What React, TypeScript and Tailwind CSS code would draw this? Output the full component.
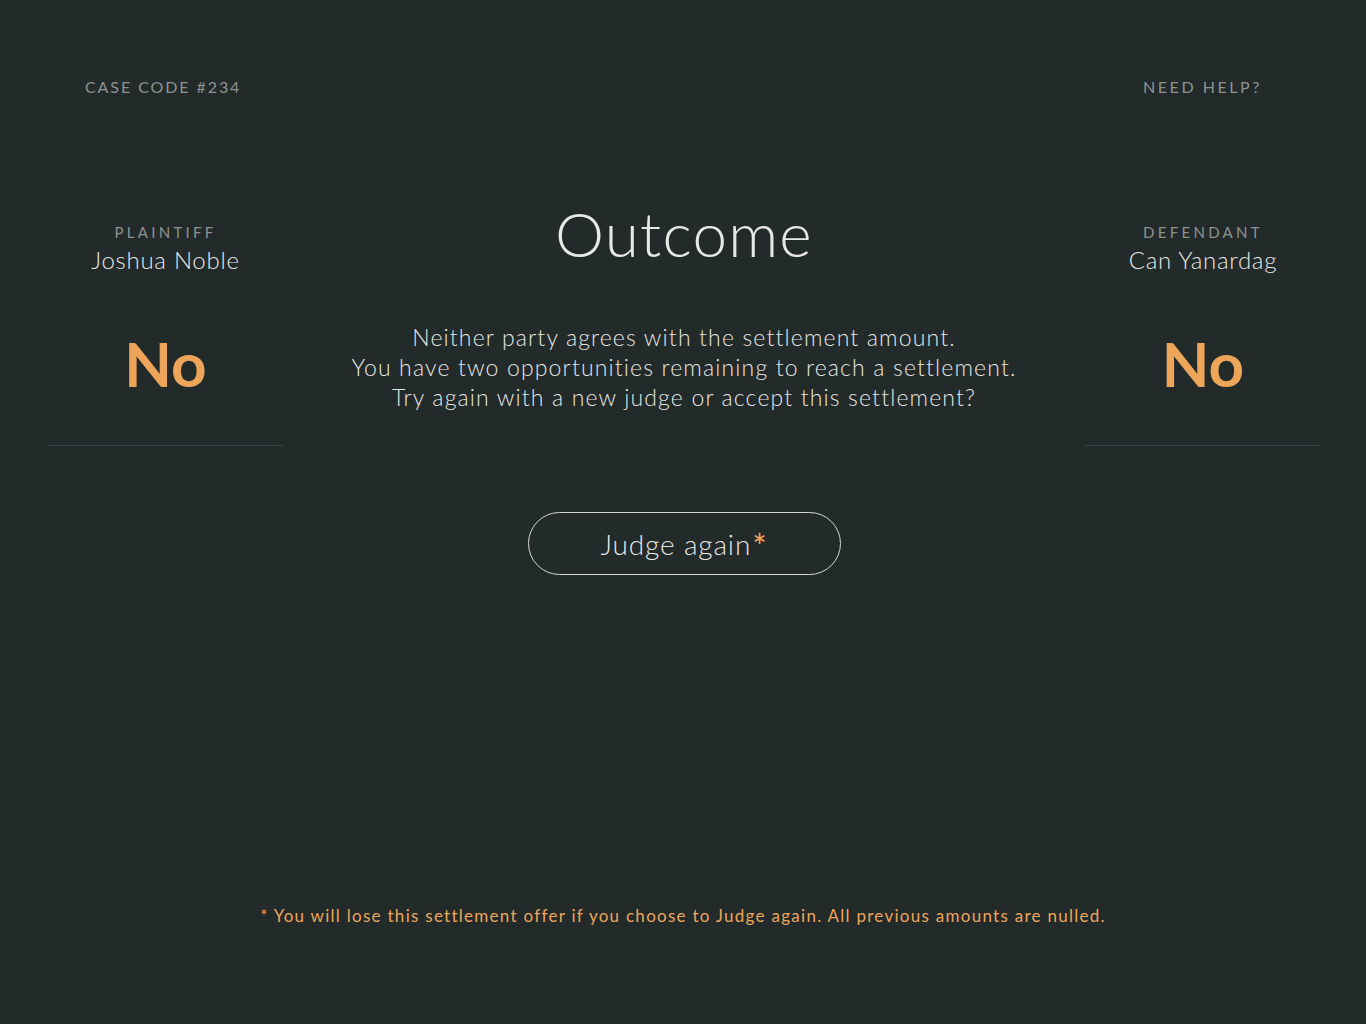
export default function App() {
  return (
    <div className="min-h-screen h-[1024px] w-full bg-[#222a2a] text-[#e6e6e3] flex flex-col font-['Lato',sans-serif]">
      {/* Top bar */}
      <header className="flex items-center justify-between pl-[85px] pr-[104px] pt-[75px] text-[16px] uppercase tracking-[0.12em] text-[#8e9392]">
        <span>Case code #234</span>
        <span className="tracking-[0.16em]">Need help?</span>
      </header>

      {/* Main */}
      <main className="grid grid-cols-[235px_1fr_236px] pl-[48px] pr-[45px] mt-[102px]">
        <Party role="Plaintiff" name="Joshua Noble" answer="No" />

        <section className="flex flex-col items-center">
          <h1 className="text-[62px] leading-none font-light tracking-[0.02em] text-[#e8e8e6] mt-[1px]">
            Outcome
          </h1>
          <p className="mt-[58px] text-center text-[23px] leading-[30px] tracking-[0.05em] font-light text-[#e6e6e3]">
            Neither party agrees with the settlement amount.
            <br />
            You have two opportunities remaining to reach a settlement.
            <br />
            Try again with a new judge or accept this settlement?
          </p>
          <button className="mt-[100px] w-[313px] h-[63px] rounded-full border border-[#d6d6d3] text-[28px] tracking-[0.03em] font-light text-[#e6e6e3] flex items-center justify-center">
            Judge again
            <span className="text-[#eda55a] text-[34px] font-normal leading-none mt-[4px] ml-[1px]">*</span>
          </button>
        </section>

        <Party role="Defendant" name="Can Yanardag" answer="No" />
      </main>

      {/* Footnote */}
      <footer className="mt-auto mb-[96px] text-center text-[17px] tracking-[0.075em] text-[#eda55a]">
        * You will lose this settlement offer if you choose to Judge again. All previous amounts are nulled.
      </footer>
    </div>
  );
}

function Party({ role, name, answer }: { role: string; name: string; answer: string }) {
  return (
    <div className="flex flex-col items-center border-b border-[#3c4545] h-[245px]">
      <span className="text-[15px] uppercase tracking-[0.22em] text-[#8e9392] mt-[24px] leading-none">
        {role}
      </span>
      <span className="text-[24px] tracking-[0.03em] mt-[8px] leading-none font-light text-[#e6e6e3]">{name}</span>
      <span className="text-[62px] font-bold leading-none text-[#eda55a] mt-[60px]">{answer}</span>
    </div>
  );
}
